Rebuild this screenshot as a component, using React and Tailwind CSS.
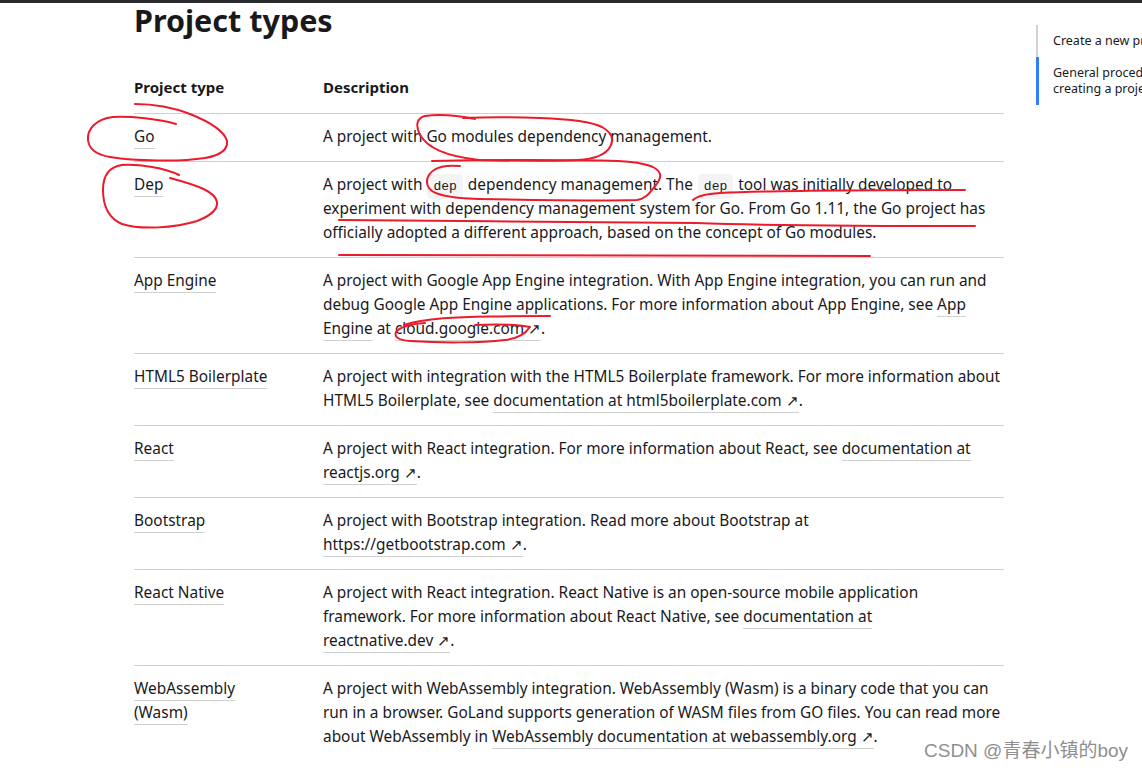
import React from "react";

const Ref = ({ children }) => (
  <a className="border-b border-[#d1d1d2] pb-[1px] whitespace-nowrap">{children}</a>
);

const Code = ({ children }) => (
  <code className="mx-[1px] rounded-[4px] bg-[#f4f4f4] px-[6px] py-[5px] font-['Liberation_Mono',monospace] text-[13px] leading-none">
    {children}
  </code>
);

const rows = [
  {
    name: <Ref>Go</Ref>,
    desc: <>A project with Go modules dependency management.</>,
  },
  {
    name: <Ref>Dep</Ref>,
    desc: (
      <>
        A project with <Code>dep</Code> dependency management. The <Code>dep</Code> tool was initially developed to
        <br />
        experiment with dependency management system for Go. From Go 1.11, the Go project has
        <br />
        officially adopted a different approach, based on the concept of Go modules.
      </>
    ),
  },
  {
    name: <Ref>App Engine</Ref>,
    desc: (
      <>
        A project with Google App Engine integration. With App Engine integration, you can run and
        <br />
        debug Google App Engine applications. For more information about App Engine, see <Ref>App</Ref>
        <br />
        <Ref>Engine</Ref> at <Ref>cloud.google.com ↗</Ref>.
      </>
    ),
  },
  {
    name: <Ref>HTML5 Boilerplate</Ref>,
    desc: (
      <>
        A project with integration with the HTML5 Boilerplate framework. For more information about
        <br />
        HTML5 Boilerplate, see <Ref>documentation at html5boilerplate.com ↗</Ref>.
      </>
    ),
  },
  {
    name: <Ref>React</Ref>,
    desc: (
      <>
        A project with React integration. For more information about React, see <Ref>documentation at</Ref>
        <br />
        <Ref>reactjs.org ↗</Ref>.
      </>
    ),
  },
  {
    name: <Ref>Bootstrap</Ref>,
    desc: (
      <>
        A project with Bootstrap integration. Read more about Bootstrap at
        <br />
        <Ref>https://getbootstrap.com ↗</Ref>.
      </>
    ),
  },
  {
    name: <Ref>React Native</Ref>,
    desc: (
      <>
        A project with React integration. React Native is an open-source mobile application
        <br />
        framework. For more information about React Native, see <Ref>documentation at</Ref>
        <br />
        <Ref>reactnative.dev ↗</Ref>.
      </>
    ),
  },
  {
    name: (
      <>
        <Ref>WebAssembly</Ref>
        <br />
        <Ref>(Wasm)</Ref>
      </>
    ),
    desc: (
      <>
        A project with WebAssembly integration. WebAssembly (Wasm) is a binary code that you can
        <br />
        run in a browser. GoLand supports generation of WASM files from GO files. You can read more
        <br />
        about WebAssembly in <Ref>WebAssembly documentation at webassembly.org ↗</Ref>.
      </>
    ),
  },
];

// red pen marks drawn over the page
const Annotations = () => (
  <svg className="pointer-events-none absolute left-0 top-0" width="1142" height="770" fill="none" stroke="#ea1c2c" strokeWidth="2" strokeLinecap="round" strokeLinejoin="round">
    <path d="M176 124C160 119 130 116 113 117C95 119 87 130 88 140C89 150 98 155 110 157C135 161 180 162 205 158C222 155 228 149 227 141C224 130 205 120 190 114C172 107 155 104 135 104" />
    <path d="M179 175C165 168 140 164 122 165C108 167 103 177 103 190C103 205 108 218 122 224C140 230 175 228 197 221C210 216 218 210 217 202C215 192 200 186 170 178" />
    <path d="M475 119C460 116 440 114 425 116C417 118 415 125 420 135C428 148 445 156 479 160C510 161 560 161 578 160C595 159 606 154 610 147C615 138 611 132 602 127C590 121 570 119 540 118C515 117 485 117 463 118" />
    <path d="M460 166C448 165 440 166 434 170C427 175 425 182 429 188C433 194 445 198 479 199C530 200 600 201 637 200C646 199 650 192 656 185C662 177 662 172 653 167C640 162 625 161 600 160.500C560 160 480 160 432 161" />
    <path d="M693 200C697 196 705 194 720 193C780 190 880 190 965 190" />
    <path d="M339 220C450 221 600 222 696 223C780 226 880 226 975 226" />
    <path d="M339 255C520 256 700 256 870 256" />
    <path d="M404 325C425 318 459 317 490 316.500C510 316 530 316 550 316" />
    <path d="M530 327C515 324 495 324 475 325M396 332C394 337 398 340 410 341C440 343 480 343 505 340C520 338 526 333 529 328" />
    <path d="M396 332C400 327 410 324 425 323" />
  </svg>
);

const App = () => {
  return (
    <div className="relative h-[770px] w-[1142px] overflow-hidden bg-white font-['Noto_Sans',sans-serif] text-[#19191c]">
      <div className="h-[3px] bg-[#2b2b2e]" />

      <div className="flex pl-[134px]">
        {/* Main column */}
        <main className="w-[870px] shrink-0">
          <h1 className="text-[30.500px] font-bold leading-[34px]">Project types</h1>

          <table className="mt-[30px] w-full border-collapse text-[15.400px] leading-[24px]">
            <thead>
              <tr className="border-b border-[#d1d1d2] text-left">
                <th className="w-[189px] pb-[14px] pt-[8px] text-[15px] font-bold">Project type</th>
                <th className="pb-[14px] pt-[8px] text-[15px] font-bold">Description</th>
              </tr>
            </thead>
            <tbody>
              {rows.map((row, index) => (
                <tr key={index} className="border-b border-[#d1d1d2] align-top last:border-0">
                  <td className="pb-[12.500px] pt-[10.500px]">{row.name}</td>
                  <td className="pb-[12.500px] pt-[10.500px] whitespace-nowrap">{row.desc}</td>
                </tr>
              ))}
            </tbody>
          </table>
        </main>

        {/* On this page */}
        <aside className="ml-[32px] mt-[22px] shrink-0 text-[12.500px] leading-[16px]">
          <div className="w-[200px] border-l-2 border-[#d1d1d2] pb-[8px] pl-[15px] pt-[8px]">Create a new project</div>
          <div className="w-[200px] border-l-[3px] border-[#307fff] py-[8px] pl-[14px]">
            General procedure for
            <br />
            creating a project
          </div>
        </aside>
      </div>

      <Annotations />

      <div className="absolute left-[924px] top-[739px] font-['Liberation_Sans','Noto_Sans_CJK_SC',sans-serif] text-[19px] leading-[24px] text-[#8f8f8f]">
        CSDN @青春小镇的boy
      </div>
    </div>
  );
};

export default App;
